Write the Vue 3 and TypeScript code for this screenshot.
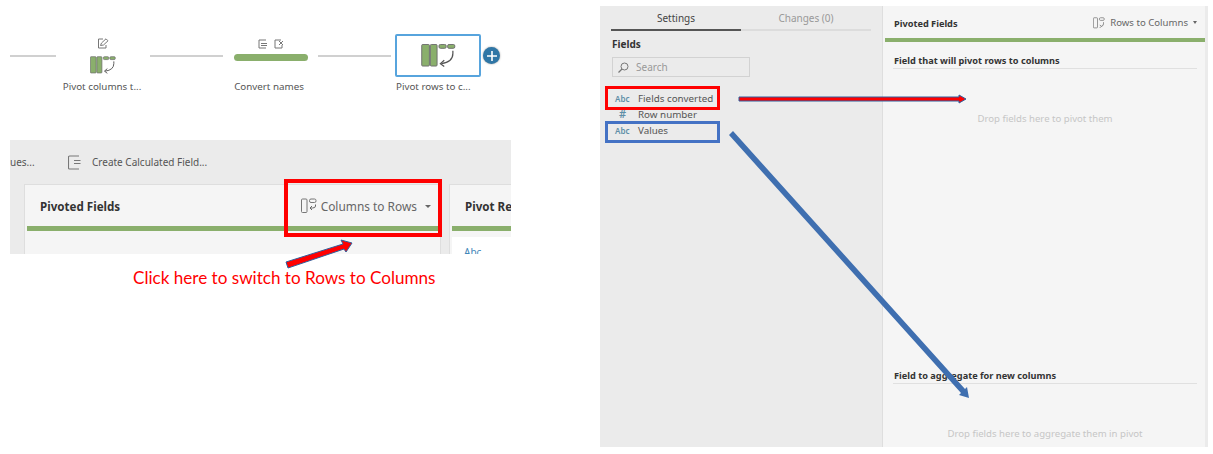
<template>
  <div class="page">
    <!-- left half: flow strip + pivot step screenshot -->
    <div class="left">
      <div class="flow">
        <div class="link link-a"></div>
        <div class="node node-a">
          <div class="node-visual">
            <svg class="top-icon" width="12" height="11" viewBox="0 0 12 11">
              <path d="M6 1H1.500v9H9V7" fill="none" stroke="#777" stroke-width="1" />
              <path d="M3.500 7.500l1-2.500L9 .8l2 2L6.500 7z" fill="#fff" stroke="#777" stroke-width="1" />
            </svg>
            <svg class="step-small" viewBox="0 0 36 24">
              <rect x=".5" y=".5" width="8" height="22.500" rx="1" fill="#8aaf6c" stroke="#6e6e6e" />
              <rect x="9.500" y=".5" width="7" height="22.500" rx="1" fill="#8aaf6c" stroke="#6e6e6e" />
              <rect x="18.500" y=".5" width="7.500" height="4" rx="1.500" fill="#8aaf6c" stroke="#6e6e6e" />
              <rect x="27.500" y=".5" width="7.500" height="4" rx="1.500" fill="#8aaf6c" stroke="#6e6e6e" />
              <path d="M33 7v3q0 9-12 10.500" fill="none" stroke="#555" stroke-width="1.300" />
              <path d="M24 17l-4 3.500 4 3" fill="none" stroke="#555" stroke-width="1.300" />
            </svg>
          </div>
          <span class="node-label label-a">Pivot columns t...</span>
        </div>
        <div class="link link-b"></div>
        <div class="node node-b">
          <div class="node-visual">
            <div class="top-pair">
              <svg width="10" height="10" viewBox="0 0 10 10">
                <path d="M8 1H1v8h7M3 4.500h6M3 6.500h6" fill="none" stroke="#777" stroke-width="1" />
              </svg>
              <svg width="10" height="10" viewBox="0 0 10 10">
                <path d="M7 1H1v8h7V6M5 2l4 4M9 2L5 6" fill="none" stroke="#777" stroke-width="1" />
              </svg>
            </div>
            <div class="green-pill"></div>
          </div>
          <span class="node-label label-b">Convert names</span>
        </div>
        <div class="link link-b"></div>
        <div class="node node-c">
          <div class="node-visual selected">
            <svg class="step-large" viewBox="0 0 36 24">
              <rect x=".5" y=".5" width="8" height="22.500" rx="1" fill="#8aaf6c" stroke="#6e6e6e" />
              <rect x="9.500" y=".5" width="7" height="22.500" rx="1" fill="#8aaf6c" stroke="#6e6e6e" />
              <rect x="18.500" y=".5" width="7.500" height="4" rx="1.500" fill="#8aaf6c" stroke="#6e6e6e" />
              <rect x="27.500" y=".5" width="7.500" height="4" rx="1.500" fill="#8aaf6c" stroke="#6e6e6e" />
              <path d="M33 7v3q0 9-12 10.500" fill="none" stroke="#555" stroke-width="1.300" />
              <path d="M24 17l-4 3.500 4 3" fill="none" stroke="#555" stroke-width="1.300" />
            </svg>
          </div>
          <span class="node-label node-label-left">Pivot rows to c...</span>
          <span class="add-btn">
            <svg width="10" height="10" viewBox="0 0 10 10">
              <path d="M5 0v10M0 5h10" stroke="#fff" stroke-width="1.600" />
            </svg>
          </span>
        </div>
      </div>

      <div class="pivot">
        <div class="toolbar">
          <span class="tool-cut">ues...</span>
          <svg class="tool-icon" width="13" height="15" viewBox="0 0 13 15">
            <path d="M11 1H1.500a1 1 0 0 0-1 1v11a1 1 0 0 0 1 1H11M6 5.500h6.500M6 8.500h6.500" fill="none" stroke="#777" stroke-width="1.100" />
          </svg>
          <span class="tool-text">Create Calculated Field...</span>
        </div>
        <div class="cards">
          <div class="stub"></div>
          <div class="card">
            <div class="card-head">
              <span class="card-title">Pivoted Fields</span>
              <span class="mode mode-big">
                <svg width="16" height="16" viewBox="0 0 16 16">
                  <rect x=".5" y="1" width="5.500" height="13.500" rx="1" fill="none" stroke="#777" />
                  <rect x="8.500" y="1" width="6.500" height="3.500" rx="1.500" fill="none" stroke="#777" />
                  <path d="M14.500 6.500v1.500q0 2-3 2H9M11 8l-2 2 2 2" fill="none" stroke="#666" />
                </svg>
                <span>Columns to Rows</span>
                <i class="caret"></i>
              </span>
            </div>
            <div class="green-rule"></div>
          </div>
          <div class="card card-clip">
            <div class="card-head">
              <span class="card-title">Pivot Results</span>
            </div>
            <div class="green-rule"></div>
            <div class="result-box"><span>Abc</span></div>
          </div>
        </div>
      </div>

      <p class="note">Click here to switch to Rows to Columns</p>
    </div>

    <!-- right half: settings panel -->
    <div class="panel">
      <div class="side">
        <div class="tabs">
          <span class="tab active">Settings</span>
          <span class="tab">Changes (0)</span>
        </div>
        <div class="side-title">Fields</div>
        <div class="search">
          <svg width="11" height="11" viewBox="0 0 11 11">
            <circle cx="6.500" cy="4.500" r="3.500" fill="none" stroke="#777" />
            <path d="M4 7l-3.500 3.500" stroke="#777" stroke-width="1.200" />
          </svg>
          <span>Search</span>
        </div>
        <div class="field-list">
          <div v-for="f in fields" :key="f.name" class="field">
            <span class="field-type" :class="{ hash: f.type === '#' }">{{ f.type }}</span>
            <span>{{ f.name }}</span>
          </div>
        </div>
      </div>
      <div class="main">
        <div class="main-head">
          <span class="main-title">Pivoted Fields</span>
          <span class="mode">
            <svg width="12" height="12" viewBox="0 0 16 16">
              <rect x=".5" y="1" width="5.500" height="13.500" rx="1" fill="none" stroke="#777" />
              <rect x="8.500" y="1" width="6.500" height="3.500" rx="1.500" fill="none" stroke="#777" />
              <path d="M14 7v2q0 3-3 3.500M9 10.500l2 2-2 2" fill="none" stroke="#666" />
            </svg>
            <span>Rows to Columns</span>
            <i class="caret small"></i>
          </span>
        </div>
        <div class="main-rule"></div>
        <section class="drop grow">
          <h4>Field that will pivot rows to columns</h4>
          <p class="drop-a">Drop fields here to pivot them</p>
        </section>
        <section class="drop">
          <h4>Field to aggregate for new columns</h4>
          <p class="drop-b">Drop fields here to aggregate them in pivot</p>
        </section>
      </div>
    </div>

    <!-- hand drawn callouts on top of the screenshots -->
    <svg class="callouts" width="1213" height="454" viewBox="0 0 1213 454">
      <rect x="286" y="181" width="154" height="54" fill="none" stroke="#ff0000" stroke-width="4" />
      <polygon points="286,262 343,244 341,240 352,243 346,252 344,249 288,268" fill="#ff0000" stroke="#2f5f9e" stroke-width="1" />
      <rect x="606.500" y="87.500" width="112" height="21" fill="none" stroke="#ff0000" stroke-width="3" />
      <rect x="606.500" y="122.500" width="112" height="19" fill="none" stroke="#4472c4" stroke-width="3" />
      <polygon points="739,97 959,97 959,95 966,99 959,103 959,101 739,101" fill="#ff0000" stroke="#2f5f9e" stroke-width="1" />
      <polygon points="733,131 965,389 967,387 969,398 959,395 961,393 729,135" fill="#3f6fb0" />
    </svg>
  </div>
</template>

<script setup lang="ts">
interface Field {
  type: string
  name: string
}

const fields: Field[] = [
  { type: 'Abc', name: 'Fields converted' },
  { type: '#', name: 'Row number' },
  { type: 'Abc', name: 'Values' }
]
</script>

<style>
html,
body {
  margin: 0;
  background: #fff;
}
</style>

<style scoped>
.page {
  position: relative;
  display: flex;
  width: 1213px;
  height: 454px;
  overflow: hidden;
  background: #fff;
  font-family: "Noto Sans", "Open Sans", sans-serif;
  color: #555;
}

.left {
  width: 590px;
  margin-left: 10px;
}

.flow {
  display: flex;
  align-items: flex-start;
  height: 140px;
}

.link {
  height: 2px;
  margin-top: 55px;
  background: #d0d0d0;
}

.link-a {
  width: 46px;
}

.link-b {
  width: 73px;
}

.node {
  position: relative;
  display: flex;
  flex-direction: column;
  align-items: center;
  padding-top: 34px;
}

.node-a {
  width: 94px;
}

.node-b {
  width: 94px;
  margin-left: 1px;
}

.node-c {
  width: 86px;
  margin-left: 4px;
}

.node-visual {
  display: flex;
  flex-direction: column;
  align-items: center;
  height: 43px;
  box-sizing: border-box;
  padding-top: 4px;
}

.node-visual.selected {
  width: 86px;
  justify-content: center;
  padding-top: 0;
  border: 2px solid #57a4dd;
  border-radius: 2px;
  background: #fff;
}

.node-label {
  margin-top: 3px;
  font-size: 9.800px;
  line-height: 14px;
  white-space: nowrap;
  color: #555;
}

.label-a {
  margin-right: 2px;
}

.label-b {
  margin-right: 4px;
}

.node-label-left {
  align-self: flex-start;
  margin-left: 1px;
}

.top-icon {
  display: block;
  margin-bottom: 7px;
}

.step-small {
  display: block;
  width: 26px;
  height: 18px;
}

.step-large {
  display: block;
  width: 35px;
  height: 23px;
}

.top-pair {
  display: flex;
  gap: 6px;
  height: 10px;
  margin-top: 1px;
  margin-bottom: 5px;
}

.green-pill {
  width: 74px;
  height: 7px;
  border-radius: 4px;
  background: #8aaf6c;
}

.add-btn {
  position: absolute;
  top: 47px;
  right: -19px;
  display: flex;
  align-items: center;
  justify-content: center;
  width: 17px;
  height: 17px;
  border-radius: 50%;
  background: #2f76a6;
  box-shadow: 0 0 2px #999;
}

.pivot {
  width: 501px;
  height: 114px;
  overflow: hidden;
  background: #ebebeb;
}

.toolbar {
  display: flex;
  align-items: center;
  height: 44px;
  font-size: 10px;
  color: #555;
}

.tool-cut {
  width: 58px;
}

.tool-icon {
  margin-right: 11px;
}

.cards {
  display: flex;
  height: 70px;
}

.stub {
  width: 14px;
  flex: none;
}

.card {
  flex: none;
  width: 417px;
  box-sizing: border-box;
  padding-left: 2px;
  padding-right: 2px;
  background: #f5f5f5;
  border: 1px solid #dedede;
  border-bottom: 0;
}

.card-clip {
  width: 70px;
  margin-left: 8px;
  border-right: 0;
  padding-right: 0;
  overflow: hidden;
}

.card-head {
  display: flex;
  align-items: center;
  justify-content: space-between;
  height: 41px;
  padding: 0 7px 0 13px;
}

.card-title {
  padding-top: 2px;
  font-size: 11.600px;
  font-weight: 700;
  color: #333;
  white-space: nowrap;
}

.green-rule {
  height: 5px;
  background: #8aaf6c;
}

.result-box {
  height: 30px;
  margin-top: 6px;
  padding: 8px 0 0 12px;
  background: #fff;
  font-size: 10px;
  color: #3f86b8;
}

.mode {
  display: flex;
  align-items: center;
  gap: 5px;
  padding-top: 1px;
  font-size: 9.600px;
  color: #666;
  white-space: nowrap;
}

.mode svg {
  flex: none;
}

.mode-big {
  gap: 4px;
  font-size: 11.900px;
}

.caret {
  width: 0;
  height: 0;
  margin-left: 4px;
  border-left: 3px solid transparent;
  border-right: 3px solid transparent;
  border-top: 3px solid #666;
}

.caret.small {
  margin-left: 0;
  border-left-width: 2px;
  border-right-width: 2px;
}

.note {
  margin: 14px 0 0 123px;
  font-family: Lato, "Open Sans", sans-serif;
  font-size: 17.100px;
  line-height: 20px;
  color: #ff0000;
}

.panel {
  display: flex;
  width: 608px;
  height: 441px;
  margin-top: 6px;
  background: #ebebeb;
}

.side {
  width: 282px;
  flex: none;
  box-sizing: border-box;
  padding: 0 11px 0 11px;
}

.tabs {
  display: flex;
  margin-top: 2px;
}

.tab {
  width: 130px;
  height: 21px;
  border-bottom: 2px solid #dcdcdc;
  font-size: 10px;
  line-height: 20px;
  text-align: center;
  color: #999;
}

.tab.active {
  border-bottom-color: #555;
  color: #444;
}

.side-title {
  margin-top: 6px;
  padding-left: 1px;
  font-size: 10px;
  line-height: 14px;
  font-weight: 700;
  color: #333;
}

.search {
  display: flex;
  align-items: center;
  gap: 7px;
  width: 138px;
  height: 20px;
  margin-top: 6px;
  margin-left: 1px;
  box-sizing: border-box;
  padding-left: 5px;
  border: 1px solid #d2d2d2;
  font-size: 10px;
  color: #999;
}

.field-list {
  margin-top: 13px;
}

.field {
  display: flex;
  align-items: center;
  height: 16px;
  font-size: 9.800px;
  color: #555;
}

.field-type {
  width: 23px;
  margin-left: 4px;
  font-size: 8px;
  font-weight: 600;
  color: #5f8fa8;
}

.field-type.hash {
  width: 19px;
  padding-left: 4px;
  font-size: 11px;
  line-height: 12px;
}

.main {
  display: flex;
  flex-direction: column;
  width: 323px;
  flex: none;
  box-sizing: border-box;
  padding: 0 0 0 2px;
  background: #f5f5f5;
  border-left: 1px solid #dedede;
}

.main-head {
  display: flex;
  align-items: center;
  justify-content: space-between;
  height: 32px;
  padding: 0 8px 0 9px;
}

.main-title {
  padding-top: 2px;
  font-size: 9.200px;
  font-weight: 700;
  color: #333;
}

.main-rule {
  height: 4px;
  background: #8aaf6c;
}

.drop {
  padding: 0 8px;
}

.drop.grow {
  flex: 1;
}

.drop h4 {
  margin: 0;
  padding: 12px 0 1px 1px;
  border-bottom: 1px solid #e0e0e0;
  font-size: 9.200px;
  line-height: 13px;
  font-weight: 700;
  color: #333;
}

.drop p {
  margin: 0;
  font-size: 9.600px;
  line-height: 14px;
  text-align: center;
  color: #c6c6c6;
}

.drop .drop-a {
  margin-top: 43px;
}

.drop .drop-b {
  margin-top: 43px;
  padding-bottom: 6px;
}

.callouts {
  position: absolute;
  top: 0;
  left: 0;
  pointer-events: none;
}
</style>
